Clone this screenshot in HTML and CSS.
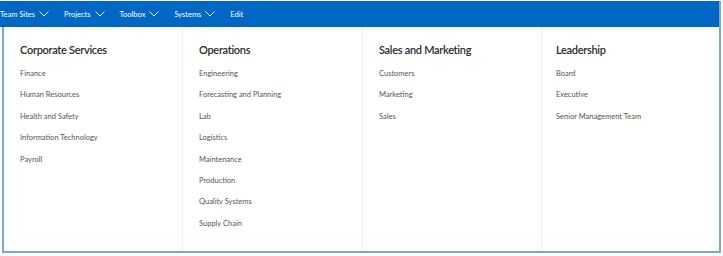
FILE: index.html
```html
<!DOCTYPE html>
<html>
<head>
    <link rel="stylesheet" href="styles.css">
</head>
<body>
    <div class="frame">
        <div class="topbar">
            <span class="nav-item">Team Sites <svg class="chev" viewBox="0 0 10 6"><path d="M0.5 0.5 L5 5 L9.5 0.5"/></svg></span>
            <span class="nav-item">Projects <svg class="chev" viewBox="0 0 10 6"><path d="M0.5 0.5 L5 5 L9.5 0.5"/></svg></span>
            <span class="nav-item">Toolbox <svg class="chev" viewBox="0 0 10 6"><path d="M0.5 0.5 L5 5 L9.5 0.5"/></svg></span>
            <span class="nav-item">Systems <svg class="chev" viewBox="0 0 10 6"><path d="M0.5 0.5 L5 5 L9.5 0.5"/></svg></span>
            <span class="nav-item">Edit</span>
        </div>
        <div class="menu">
            <div class="column">
                <div class="heading">Corporate Services</div>
                <a class="link">Finance</a>
                <a class="link">Human Resources</a>
                <a class="link">Health and Safety</a>
                <a class="link">Information Technology</a>
                <a class="link">Payroll</a>
            </div>
            <div class="column">
                <div class="heading">Operations</div>
                <a class="link">Engineering</a>
                <a class="link">Forecasting and Planning</a>
                <a class="link">Lab</a>
                <a class="link">Logistics</a>
                <a class="link">Maintenance</a>
                <a class="link">Production</a>
                <a class="link">Quality Systems</a>
                <a class="link">Supply Chain</a>
            </div>
            <div class="column">
                <div class="heading">Sales and Marketing</div>
                <a class="link">Customers</a>
                <a class="link">Marketing</a>
                <a class="link">Sales</a>
            </div>
            <div class="column">
                <div class="heading">Leadership</div>
                <a class="link">Board</a>
                <a class="link">Executive</a>
                <a class="link">Senior Management Team</a>
            </div>
        </div>
    </div>
</body>
</html>
```

FILE: styles.css
```css
body {
    margin: 0;
    padding: 0;
    background: #ffffff;
    font-family: "Lato", "Open Sans", sans-serif;
}

.frame {
    margin: 1px 2px 0 0;
    border-right: 2px solid #7aa5e0;
}

.topbar {
    display: flex;
    align-items: center;
    height: 26px;
    background-color: #0067c5;
    color: #ffffff;
    font-size: 7.5px;
    overflow: hidden;
    white-space: nowrap;
}

.nav-item {
    display: flex;
    align-items: center;
    margin-right: 15px;
}

.chev {
    width: 10px;
    height: 6px;
    margin-left: 4px;
    fill: none;
    stroke: #ffffff;
    stroke-width: 0.9;
}

.menu {
    display: grid;
    grid-template-columns: 179px 180px 179px 1fr;
    height: 224px;
    margin-left: 2px;
    border-left: 2px solid #7aa5e0;
    border-bottom: 2px solid #7aa5e0;
}

.column {
    display: flex;
    flex-direction: column;
    padding: 16px 14px 0 16px;
    border-right: 1px solid #efefef;
}

.column:last-child {
    border-right: none;
    padding-left: 14px;
}

.heading {
    font-size: 11px;
    font-weight: 600;
    letter-spacing: -0.3px;
    color: #2b2b2b;
    margin-bottom: 7px;
}

.link {
    font-size: 7.5px;
    color: #555555;
    height: 21.4px;
    line-height: 21.4px;
}
```
